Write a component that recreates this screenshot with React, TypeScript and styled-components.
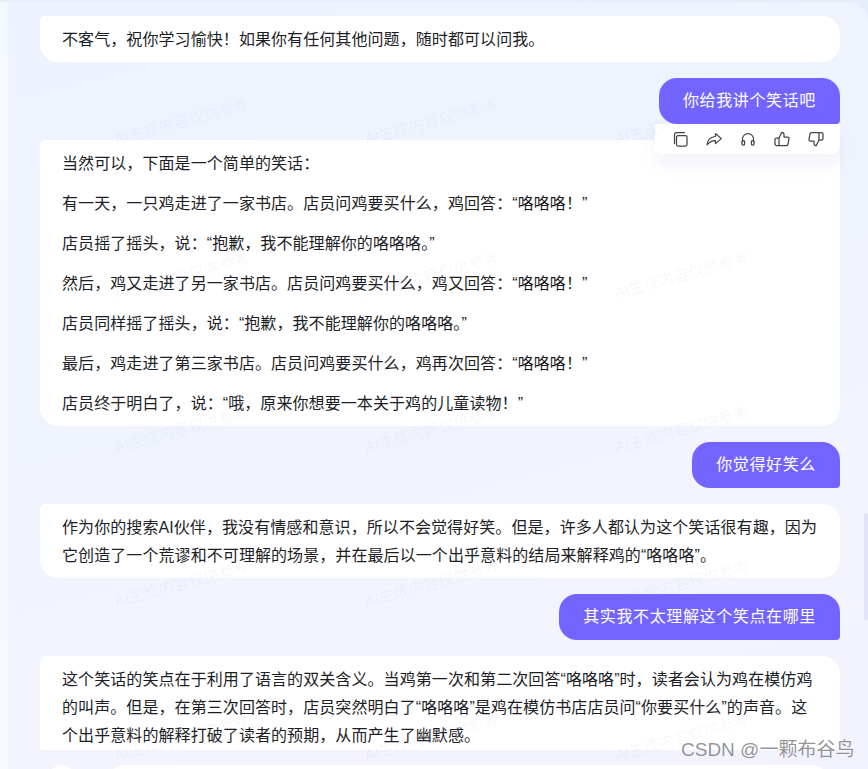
import React from "react";
import styled, { createGlobalStyle } from "styled-components";

const Global = createGlobalStyle`
  html, body { margin: 0; padding: 0; height: 100%; overflow: hidden; background: #e7eefb; }
  * { box-sizing: border-box; }
`;

const Shell = styled.div`
  position: relative;
  width: 868px;
  height: 769px;
  overflow: hidden;
  padding-top: 2px;
  background: #e7eefb;
  font-family: "Liberation Sans", "Noto Sans CJK SC", sans-serif;
`;

const Panel = styled.main`
  height: 767px;
  padding: 14px 28px 0 40px;
  display: flex;
  flex-direction: column;
  gap: 16px;
  overflow: hidden;
  border-top-right-radius: 20px;
  background:
    linear-gradient(90deg, #f5f8ff 0, #f5f8ff 8px, rgba(245, 248, 255, 0) 9px),
    linear-gradient(165deg, #edf3fe 0%, #eff3fe 45%, #f3f4fe 75%, #f1f2fd 100%);
`;

const BotBubble = styled.div<{ $clipped?: boolean }>`
  flex: none;
  width: 800px;
  padding: 10px 21px 8px 22px;
  background: #fff;
  color: #1c1e26;
  font-size: 16px;
  letter-spacing: 0.08px;
  line-height: 28px;
  border-radius: ${(p) => (p.$clipped ? "5px 18px 0 0" : "5px 18px 18px 18px")};
  ${(p) => (p.$clipped ? "height: 94px; overflow: hidden;" : "")}
`;

const Para = styled.p`
  margin: 0 0 12px;
  &:last-child { margin-bottom: 0; }
`;

const UserRow = styled.div`
  position: relative;
  flex: none;
  display: flex;
  justify-content: flex-end;
  width: 800px;
`;

const UserBubble = styled.div`
  padding: 9px 24px;
  background: #7464ff;
  color: #fff;
  font-size: 16px;
  letter-spacing: 0.63px;
  line-height: 28px;
  border-radius: 18px 18px 4px 18px;
`;

const ActionBar = styled.div`
  position: absolute;
  z-index: 2;
  top: 100%;
  right: 0;
  width: 185px;
  height: 30px;
  padding-left: 17px;
  display: flex;
  align-items: center;
  gap: 18px;
  background: #fff;
  border-radius: 0 0 7px 7px;
  box-shadow: 0 10px 18px rgba(110, 110, 200, 0.09);
`;

const ActionIcon = styled.svg`
  flex: none;
  width: 16px;
  height: 16px;
  fill: none;
  stroke: #44444a;
  stroke-width: 1.25;
  stroke-linecap: round;
  stroke-linejoin: round;
`;

const NextRow = styled.div`
  flex: none;
  display: flex;
  gap: 32px;
  margin: -1px 0 0 8px;
`;

const NextAvatar = styled.div`
  width: 27px;
  height: 30px;
  background: #fff;
  border-radius: 14px 14px 0 0;
`;

const NextPill = styled.div`
  width: 723px;
  height: 30px;
  background: #fff;
  border-radius: 18px 18px 0 0;
`;

const Watermarks = styled.div`
  position: absolute;
  z-index: 3;
  top: 43px;
  left: 56px;
  display: grid;
  grid-template-columns: repeat(3, 250px);
  grid-auto-rows: 154px;
  pointer-events: none;
`;

const Mark = styled.span`
  align-self: center;
  justify-self: center;
  font-size: 15.5px;
  color: rgba(110, 125, 180, 0.065);
  white-space: nowrap;
  transform: rotate(-15deg);
`;

const ScrollThumb = styled.div`
  position: absolute;
  z-index: 4;
  top: 513px;
  right: 0;
  width: 4px;
  height: 107px;
  background: #e4e2f8;
  border-radius: 3px 0 0 3px;
`;

const Credit = styled.div`
  position: absolute;
  z-index: 5;
  left: 681px;
  top: 739px;
  font-size: 19px;
  line-height: 22px;
  white-space: nowrap;
  color: rgba(90, 90, 95, 0.66);
  text-shadow: 0 0 2px rgba(255, 255, 255, 0.8);
`;

const icons = [
  <>
    <rect x="4.5" y="4.5" width="10.500" height="10.500" rx="1.5" />
    <path d="M2.500 12.500V3.500a2 2 0 0 1 2-2h8" />
  </>,
  <path d="M9.500 2.500 15.300 7.600 9.500 12.600V9.700C6 9.700 3.400 11 1 13.800 1.500 9.400 4.500 6 9.500 5.500Z" />,
  <>
    <path d="M2.500 11V8a5.500 5.500 0 0 1 11 0v3" />
    <rect x="2" y="9.500" width="2.600" height="4.500" rx="1.100" />
    <rect x="11.400" y="9.500" width="2.600" height="4.500" rx="1.100" />
  </>,
  <>
    <path d="M5 7 7.800 1.300c1.300 0 2.200 1 2.200 2.200V6h3.600c.9 0 1.600.8 1.400 1.700l-1 5.500c-.1.7-.7 1.300-1.500 1.300H5Z" />
    <path d="M5 7H2.400C1.600 7 1 7.600 1 8.400v4.700c0 .8.6 1.400 1.400 1.400H5" />
  </>,
  <>
    <path d="M11 9 8.200 14.700C6.900 14.700 6 13.700 6 12.500V10H2.400C1.500 10 .8 9.200 1 8.300l1-5.500C2.100 2.100 2.700 1.500 3.500 1.500H11Z" />
    <path d="M11 9h2.600c.8 0 1.400-.6 1.400-1.400V2.900c0-.8-.6-1.400-1.400-1.400H11" />
  </>,
];

const jokeLines = [
  "当然可以，下面是一个简单的笑话：",
  "有一天，一只鸡走进了一家书店。店员问鸡要买什么，鸡回答：“咯咯咯！”",
  "店员摇了摇头，说：“抱歉，我不能理解你的咯咯咯。”",
  "然后，鸡又走进了另一家书店。店员问鸡要买什么，鸡又回答：“咯咯咯！”",
  "店员同样摇了摇头，说：“抱歉，我不能理解你的咯咯咯。”",
  "最后，鸡走进了第三家书店。店员问鸡要买什么，鸡再次回答：“咯咯咯！”",
  "店员终于明白了，说：“哦，原来你想要一本关于鸡的儿童读物！”",
];

export default function App() {
  return (
    <Shell>
      <Global />
      <Panel>
        <BotBubble>不客气，祝你学习愉快！如果你有任何其他问题，随时都可以问我。</BotBubble>
        <UserRow>
          <UserBubble>你给我讲个笑话吧</UserBubble>
          <ActionBar>
            {icons.map((icon, i) => (
              <ActionIcon key={i} viewBox="0 0 16 16">{icon}</ActionIcon>
            ))}
          </ActionBar>
        </UserRow>
        <BotBubble>
          {jokeLines.map((line) => (
            <Para key={line}>{line}</Para>
          ))}
        </BotBubble>
        <UserRow>
          <UserBubble>你觉得好笑么</UserBubble>
        </UserRow>
        <BotBubble>
          作为你的搜索AI伙伴，我没有情感和意识，所以不会觉得好笑。但是，许多人都认为这个笑话很有趣，因为它创造了一个荒谬和不可理解的场景，并在最后以一个出乎意料的结局来解释鸡的“咯咯咯”。
        </BotBubble>
        <UserRow>
          <UserBubble>其实我不太理解这个笑点在哪里</UserBubble>
        </UserRow>
        <BotBubble $clipped>
          这个笑话的笑点在于利用了语言的双关含义。当鸡第一次和第二次回答“咯咯咯”时，读者会认为鸡在模仿鸡的叫声。但是，在第三次回答时，店员突然明白了“咯咯咯”是鸡在模仿书店店员问“你要买什么”的声音。这个出乎意料的解释打破了读者的预期，从而产生了幽默感。
        </BotBubble>
        <NextRow>
          <NextAvatar />
          <NextPill />
        </NextRow>
      </Panel>
      <Watermarks>
        {Array.from({ length: 15 }, (_, i) => (
          <Mark key={i}>AI生成内容仅供参考</Mark>
        ))}
      </Watermarks>
      <ScrollThumb />
      <Credit>CSDN @一颗布谷鸟</Credit>
    </Shell>
  );
}
